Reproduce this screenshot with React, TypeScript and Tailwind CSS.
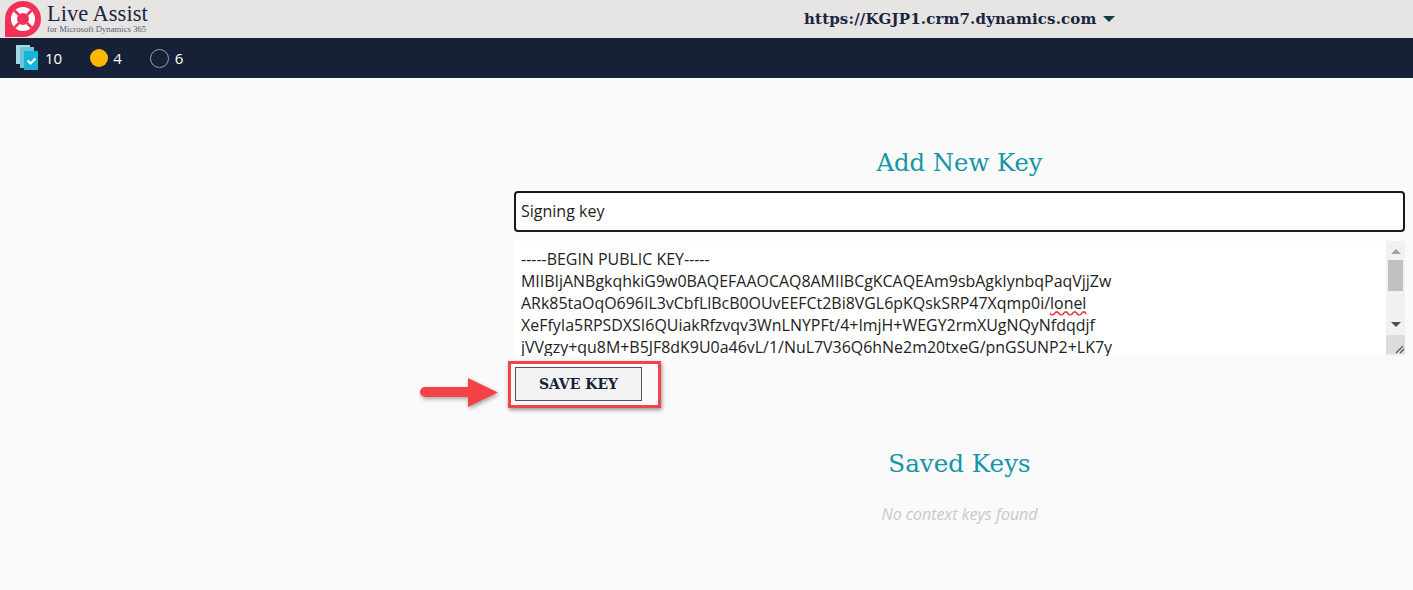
import React from "react";

const sans = "font-['Open_Sans',sans-serif]";
const slab = "font-['DejaVu_Serif',serif]";

function Logo() {
  return (
    <svg width="36" height="37" viewBox="0 0 36 37" className="shrink-0 mt-[1px]">
      <path d="M0 36 L0 18 A18 18 0 1 1 18 36 Z" fill="#f0325a" />
      <circle cx="18" cy="18" r="9" fill="none" stroke="#fff" strokeWidth="6" />
      <path d="M9.5 9.5l4.5 4.5M26.5 9.5L22 14M9.5 26.5l4.5-4.5M26.5 26.5L22 22" stroke="#f0325a" strokeWidth="2.6" />
    </svg>
  );
}

function Stack() {
  return (
    <svg width="22" height="26" viewBox="0 0 22 26" className="shrink-0">
      <rect x="0" y="0" width="14" height="19" fill="#a5d9e6" />
      <rect x="4" y="2" width="14" height="21" fill="#6cc3da" />
      <rect x="8" y="6" width="14" height="19" fill="#16b5d6" />
      <path d="M11.5 15.5l3 3 5-5" fill="none" stroke="#fff" strokeWidth="2.2" />
    </svg>
  );
}

export default function App() {
  return (
    <div className={`relative w-[1413px] h-[590px] overflow-hidden bg-[#fafafa] ${sans}`}>
      <header className="flex h-[38px] items-center bg-[#e6e5e3]">
        <div className="flex w-[804px] items-center pl-[5px] gap-[6px]">
          <Logo />
          <div className="flex flex-col -mt-[2px]">
            <span className="font-['Liberation_Serif',serif] text-[22.5px] leading-[23px] text-[#1c2540]">Live Assist</span>
            <span className="font-['Liberation_Serif',serif] text-[8.7px] leading-[9px] text-[#555b6c]">for Microsoft Dynamics 365</span>
          </div>
        </div>
        <span className={`${slab} text-[15px] font-bold text-[#1c2540] tracking-[0.15px]`}>https://KGJP1.crm7.dynamics.com</span>
        <span className="ml-[6px] h-0 w-0 border-x-[6px] border-t-[6px] border-x-transparent border-t-[#123a44]" />
      </header>

      <nav className="flex h-[40px] items-center bg-[#162138] pl-[16px] text-[15px] text-white">
        <Stack />
        <span className="ml-[7px]">10</span>
        <span className="ml-[28px] h-[18px] w-[18px] rounded-full bg-[#fbb800]" />
        <span className="ml-[5px]">4</span>
        <span className="ml-[28px] h-[19px] w-[19px] rounded-full border border-[#9aa0ad]" />
        <span className="ml-[6px]">6</span>
      </nav>

      <main className="ml-[514px] w-[891px] flex flex-col pt-[66px]">
        <h1 className={`${slab} text-center text-[24.3px] leading-[38px] text-[#1595a8]`}>Add New Key</h1>

        <div className="mt-[9px] flex h-[41px] items-center rounded-[4px] border-2 border-[#1a1a1a] bg-white pl-[5px] text-[16px] text-[#222]">
          <span className="-mt-[1px]">Signing key</span>
        </div>

        <div className="mt-[9px] flex h-[115px] bg-white overflow-hidden">
          <div className="flex-1 pl-[7px] pt-[7px] text-[15.95px] leading-[22px] text-[#222] whitespace-nowrap overflow-hidden">
            <div>-----BEGIN PUBLIC KEY-----</div>
            <div>MIIBIjANBgkqhkiG9w0BAQEFAAOCAQ8AMIIBCgKCAQEAm9sbAgkIynbqPaqVjjZw</div>
            <div>
              ARk85taOqO696IL3vCbfLlBcB0OUvEEFCt2Bi8VGL6pKQskSRP47Xqmp0i/
              <span className="underline decoration-wavy decoration-[#e53935]">lonel</span>
            </div>
            <div>XeFfyIa5RPSDXSI6QUiakRfzvqv3WnLNYPFt/4+ImjH+WEGY2rmXUgNQyNfdqdjf</div>
            <div>jVVgzy+qu8M+B5JF8dK9U0a46vL/1/NuL7V36Q6hNe2m20txeG/pnGSUNP2+LK7y</div>
          </div>
          <div className="flex w-[19px] flex-col items-center bg-[#f1f1f1]">
            <span className="mt-[8px] h-0 w-0 border-x-[5px] border-b-[5px] border-x-transparent border-b-[#a3a3a3]" />
            <span className="mt-[6px] h-[31px] w-[15px] bg-[#c1c1c1]" />
            <span className="mt-[31px] h-0 w-0 border-x-[5px] border-t-[5px] border-x-transparent border-t-[#505050]" />
            <span className="mt-[8px] flex h-[19px] w-[19px] items-end justify-end bg-[#dcdcdc]">
              <svg width="10" height="10" viewBox="0 0 10 10">
                <path d="M1 9L8 2M5 9L9 5" stroke="#555" strokeWidth="1.2" />
              </svg>
            </span>
          </div>
        </div>

        <button className={`${slab} mt-[11px] ml-[1px] h-[34px] w-[127px] border border-[#4b5263] bg-[#f3f3f3] text-[14px] font-bold text-[#162138]`}>
          SAVE KEY
        </button>

        <h2 className={`${slab} mt-[44px] text-center text-[24.6px] leading-[38px] text-[#1595a8]`}>Saved Keys</h2>
        <p className="mt-[19px] text-center text-[16px] italic text-[#c9c9c9]">No context keys found</p>
      </main>

      <div className="absolute left-[508px] top-[361px] h-[47px] w-[153px] border-[3px] border-[#f44347] shadow-[1px_2px_4px_rgba(0,0,0,0.4)]" />
      <svg className="absolute left-[418px] top-[376px]" width="84" height="38" viewBox="0 0 84 38">
        <defs>
          <filter id="s" x="-20%" y="-40%" width="140%" height="180%">
            <feDropShadow dx="1" dy="2" stdDeviation="2" floodColor="#000" floodOpacity="0.35" />
          </filter>
        </defs>
        <path d="M7 11 H50 V2 L80 16.5 L50 31 V21 H7 a5 5 0 0 1 0 -10 Z" fill="#f44347" filter="url(#s)" />
      </svg>
    </div>
  );
}
